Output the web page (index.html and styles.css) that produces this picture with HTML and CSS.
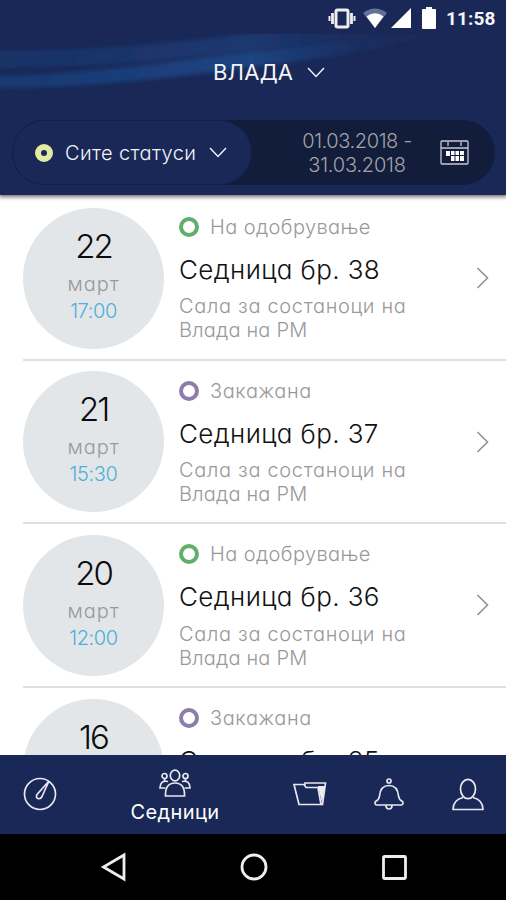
FILE: index.html
```html
<!DOCTYPE html>
<html lang="mk">
<head>
<meta charset="utf-8">
<title>Седници</title>
<link rel="stylesheet" href="styles.css">
</head>
<body>
<div class="screen">
  <header class="header">
    <svg class="swoosh" viewBox="0 0 506 70" preserveAspectRatio="none">
      <defs>
        <linearGradient id="fade" gradientUnits="userSpaceOnUse" x1="0" x2="460" y1="0" y2="0"><stop offset="0" stop-color="#1a3d78" stop-opacity=".8"/><stop offset=".55" stop-color="#1c4482"/><stop offset="1" stop-color="#192856" stop-opacity="0"/></linearGradient>
        <filter id="soft" x="-5%" y="-20%" width="110%" height="140%"><feGaussianBlur stdDeviation="2"/></filter>
      </defs>
      <g fill="url(#fade)" filter="url(#soft)">
        <path d="M-10 16C90 18 190 8 270-4H470C400 2 330 8 255 16C150 28 80 34-10 34Z" opacity=".6"/>
        <path d="M-10 42C110 40 200 22 260 17C340 7 400 3 450-4C400 12 330 24 270 31C180 42 100 54-10 54Z"/>
      </g>
    </svg>
    <div class="statusbar">
      <svg class="vibrate" viewBox="0 0 28 22"><g fill="none" stroke="#eee"><rect x="8" y="3" width="12" height="17" rx="1.5" stroke-width="3"/><path d="M4.500 6v11M23.500 6v11" stroke-width="2.800"/><path d="M1.500 9v5M26.500 9v5" stroke-width="2"/></g></svg>
      <svg class="wifi" viewBox="0 0 24 20"><path d="M0 5Q12-4 24 5L12 20Z" fill="#66719a"/><path d="M3.500 8.500Q12 2 20.500 8.500L12 20Z" fill="#fff"/></svg>
      <svg class="signal" viewBox="0 0 20 20"><path d="M20 0V20H0Z" fill="#fff"/></svg>
      <svg class="battery" viewBox="0 0 14 22"><path d="M4 0h6v2h3q1 0 1 1v18q0 1-1 1H1q-1 0-1-1V3q0-1 1-1h3Z" fill="#fff"/></svg>
      <span class="clock">11:58</span>
    </div>
    <div class="heading"><span class="heading-text">ВЛАДА</span><svg class="chev" viewBox="0 0 18 11"><path d="M1 1l8 8.500 8-8.500"/></svg></div>
    <div class="filters">
      <div class="status-filter"><i class="dot"></i><span class="filter-text">Сите статуси</span><svg class="chev" viewBox="0 0 18 11"><path d="M1 1l8 8.500 8-8.500"/></svg></div>
      <div class="dates"><span>01.03.2018 -</span><span class="date-to">31.03.2018</span></div>
      <svg class="calendar" viewBox="0 0 29 25"><g fill="none" stroke="#c9c9d1" stroke-width="1.300"><rect x="1" y="1" width="27" height="23" rx="1"/><path d="M1 8h27M8 2v4M21 2v4"/></g><path d="M6 11h4v5H6ZM11 11h3.500v4H11ZM15.500 11h3.500v4h-3.500ZM20 11h4v4h-4ZM11 16h3.500v5H11ZM15.500 16h3.500v5h-3.500ZM20 16h4v5h-4Z" fill="#fff"/></svg>
    </div>
  </header>

  <main class="list">
    <article class="row">
      <div class="date"><b class="day">22</b><span class="month">март</span><span class="time">17:00</span></div>
      <div class="info"><div class="state"><i class="ring green"></i><span class="approve">На одобрување</span></div><h2 class="title">Седница бр. 38</h2><p class="place"><span class="place-a">Сала за состаноци на</span><span class="place-b">Влада на РМ</span></p></div>
      <svg class="next" viewBox="0 0 13 22"><path d="M1.500 1l10 10-10 10"/></svg>
    </article>
    <article class="row">
      <div class="date"><b class="day">21</b><span class="month">март</span><span class="time">15:30</span></div>
      <div class="info"><div class="state"><i class="ring purple"></i><span class="booked">Закажана</span></div><h2 class="title">Седница бр. 37</h2><p class="place"><span class="place-a">Сала за состаноци на</span><span class="place-b">Влада на РМ</span></p></div>
      <svg class="next" viewBox="0 0 13 22"><path d="M1.500 1l10 10-10 10"/></svg>
    </article>
    <article class="row">
      <div class="date"><b class="day">20</b><span class="month">март</span><span class="time">12:00</span></div>
      <div class="info"><div class="state"><i class="ring green"></i><span class="approve">На одобрување</span></div><h2 class="title">Седница бр. 36</h2><p class="place"><span class="place-a">Сала за состаноци на</span><span class="place-b">Влада на РМ</span></p></div>
      <svg class="next" viewBox="0 0 13 22"><path d="M1.500 1l10 10-10 10"/></svg>
    </article>
    <article class="row">
      <div class="date"><b class="day">16</b></div>
      <div class="info"><div class="state"><i class="ring purple"></i><span class="booked">Закажана</span></div><h2 class="title">Седница бр. 35</h2></div>
    </article>
  </main>

  <nav class="tabs">
    <svg class="tab gauge" viewBox="0 0 34 34"><circle cx="17" cy="17" r="15.500"/><path d="M26 4L14 17.500q-1.500 3 1 4t4-2Z"/></svg>
    <div class="tab-active">
      <svg class="people" viewBox="0 0 32 28"><ellipse cx="16" cy="6.500" rx="4.700" ry="5.300"/><path d="M6.500 27q-.5-13 9.500-13t9.500 13Z"/><circle cx="5.500" cy="7" r="2.500"/><circle cx="26.500" cy="7" r="2.500"/><path d="M5.500 9.500v3M26.500 9.500v3M9 12.500Q1 11 1 19h5.500M23 12.500Q31 11 31 19h-5.500"/></svg>
      <span class="tab-label">Седници</span>
    </div>
    <svg class="tab folder" viewBox="0 0 34 24"><path d="M1 2.500h10l2 3h12l3 17H6Z"/><path d="M12 3V1h20.500l-3 21.500H28"/><path d="M25 4h7l-3 17Z" fill="#eee" stroke="none"/></svg>
    <svg class="tab bell" viewBox="0 0 30 32"><circle cx="15" cy="3" r="2"/><path d="M15 7.500C8 7.500 6 12 5.500 18Q5 22 1.500 23.500Q0 26.500 3 27H27Q30 26.500 28.500 23.500Q25 22 24.500 18C24 12 22 7.500 15 7.500ZM12 27.500q0 3.500 3 3.500t3-3.500"/></svg>
    <svg class="tab user" viewBox="0 0 32 33"><ellipse cx="16" cy="11" rx="7.500" ry="9.700"/><path d="M11 19.500Q1 22 1 31.500H31Q31 22 21 19.500"/></svg>
  </nav>
  <footer class="system">
    <svg class="back" viewBox="0 0 25 28"><path d="M23 2V26L2.500 14Z"/></svg>
    <svg class="home" viewBox="0 0 28 28"><circle cx="14" cy="14" r="12"/></svg>
    <svg class="recent" viewBox="0 0 25 25"><rect x="1.500" y="1.500" width="22" height="22" rx="1"/></svg>
  </footer>
</div>
</body>
</html>
```

FILE: styles.css
```css
* { box-sizing: border-box; }
body { margin: 0; background: #fff; font-family: Inter, "Noto Sans", sans-serif; font-weight: 300; font-feature-settings: "cv11", "ss03"; }
svg { display: block; flex: none; overflow: visible; }
.screen { width: 506px; height: 900px; display: flex; flex-direction: column; overflow: hidden; }

.header { position: relative; z-index: 1; flex: none; height: 195px; background: #192856; box-shadow: 0 1px 4px 1px rgba(60, 45, 45, .7); color: #f4f4f8; }
.swoosh { position: absolute; left: 0; top: 34px; width: 506px; height: 70px; overflow: hidden; }
.statusbar { position: relative; display: flex; align-items: center; height: 34px; padding: 1px 11px 0 328px; }
.vibrate { width: 28px; height: 22px; }
.wifi { width: 24px; height: 20px; margin-left: 7px; }
.signal { width: 20px; height: 20px; margin-left: 4px; }
.battery { width: 14px; height: 22px; margin-left: 11px; }
.clock { margin-left: 10px; padding-top: 2px; font: 700 19px/24px Roboto, sans-serif; letter-spacing: .1px; }
.chev { width: 18px; height: 11px; fill: none; stroke: #f0f0f5; stroke-width: 1.5; }
.heading { position: relative; display: flex; align-items: center; height: 28px; margin-top: 24px; padding-left: 213px; }
.heading-text { width: 81px; margin-right: 13px; font-size: 22px; font-weight: 400; line-height: 28px; letter-spacing: .2px; }
.filters { display: flex; align-items: center; height: 65px; margin: 34px 11px 0 12px; border-radius: 33px; background: #121c3b; }
.status-filter { display: flex; align-items: center; width: 240px; height: 65px; padding-left: 22px; border: 1px solid #142046; border-radius: 33px; background: #192856; }
.dot { width: 18px; height: 18px; margin-right: 12px; border: 6px solid #e1eba4; border-radius: 50%; }
.filter-text { width: 132px; margin-right: 12px; font-size: 20px; line-height: 26px; letter-spacing: .4px; white-space: nowrap; }
.dates { display: flex; flex-direction: column; align-items: center; width: 112px; margin-left: 49px; font-size: 20px; line-height: 24px; white-space: nowrap; letter-spacing: -.4px; color: #a2a3a6; }
.date-to { letter-spacing: -.2px; }
.calendar { width: 29px; height: 25px; margin-left: 27px; }

.list { flex: 1; min-height: 0; overflow: hidden; padding-top: 2.2px; }
.row { display: flex; height: 163.65px; margin-left: 23px; border-bottom: 2px solid #e0e0e0; }
.row:last-child { border: 0; }
.date { flex: none; display: flex; flex-direction: column; align-items: center; width: 141px; height: 141px; margin-top: 10.500px; padding-top: 21px; border-radius: 50%; background: #e3e6e8; }
.day { font-size: 33px; font-weight: 300; line-height: 34px; letter-spacing: -2px; color: #0c0c0c; }
.month { margin-top: 9px; font-size: 20px; line-height: 24px; letter-spacing: 1px; color: #999; }
.time { margin-top: 3px; font-size: 20px; line-height: 24px; letter-spacing: -.4px; color: #4fafd8; }
.info { width: 260px; margin-left: 15px; padding-top: 17.800px; white-space: nowrap; }
.state { display: flex; align-items: center; font-size: 20px; line-height: 24px; color: #999; }
.ring { width: 20px; height: 20px; margin-right: 11px; border: 4px solid; border-radius: 50%; }
.approve { letter-spacing: .4px; }
.booked { letter-spacing: .6px; }
.green { border-color: #64ae6c; }
.purple { border-color: #8c7dad; }
.title { margin: 15px 0 0; font-size: 26px; font-weight: 300; line-height: 32px; letter-spacing: .4px; color: #111; }
.place { display: flex; flex-direction: column; align-items: flex-start; margin: 8.500px 0 0; font-size: 20px; line-height: 24px; color: #999; }
.place-a { letter-spacing: .68px; }
.place-b { letter-spacing: .2px; }
.next { width: 13px; height: 22px; margin: 70px 0 0 37px; fill: none; stroke: #929292; stroke-width: 1.6; }

.tabs { position: relative; flex: none; display: flex; align-items: center; height: 79px; padding-bottom: 1px; background: #192856; color: #fff; fill: none; stroke: #e8e6f0; stroke-width: 1.7; }
.gauge { width: 34px; height: 34px; margin-left: 23px; }
.tab-active { display: flex; flex-direction: column; align-items: center; width: 92px; margin-left: 72px; font-size: 20px; font-weight: 400; line-height: 26px; letter-spacing: .4px; }
.people { width: 32px; height: 28px; margin-top: 5px; }
.tab-label { margin-top: 2px; }
.folder { width: 34px; height: 24px; margin-left: 72px; }
.bell { width: 30px; height: 32px; margin-left: 47px; }
.user { width: 32px; height: 33px; margin-left: 48px; }
.system { flex: none; display: flex; align-items: center; height: 66px; background: #000; fill: none; stroke: #eee; stroke-width: 2.8; }
.back { width: 25px; height: 28px; margin-left: 101px; }
.home { width: 28px; height: 28px; margin-left: 114px; }
.recent { width: 25px; height: 25px; margin-left: 114px; }
```
